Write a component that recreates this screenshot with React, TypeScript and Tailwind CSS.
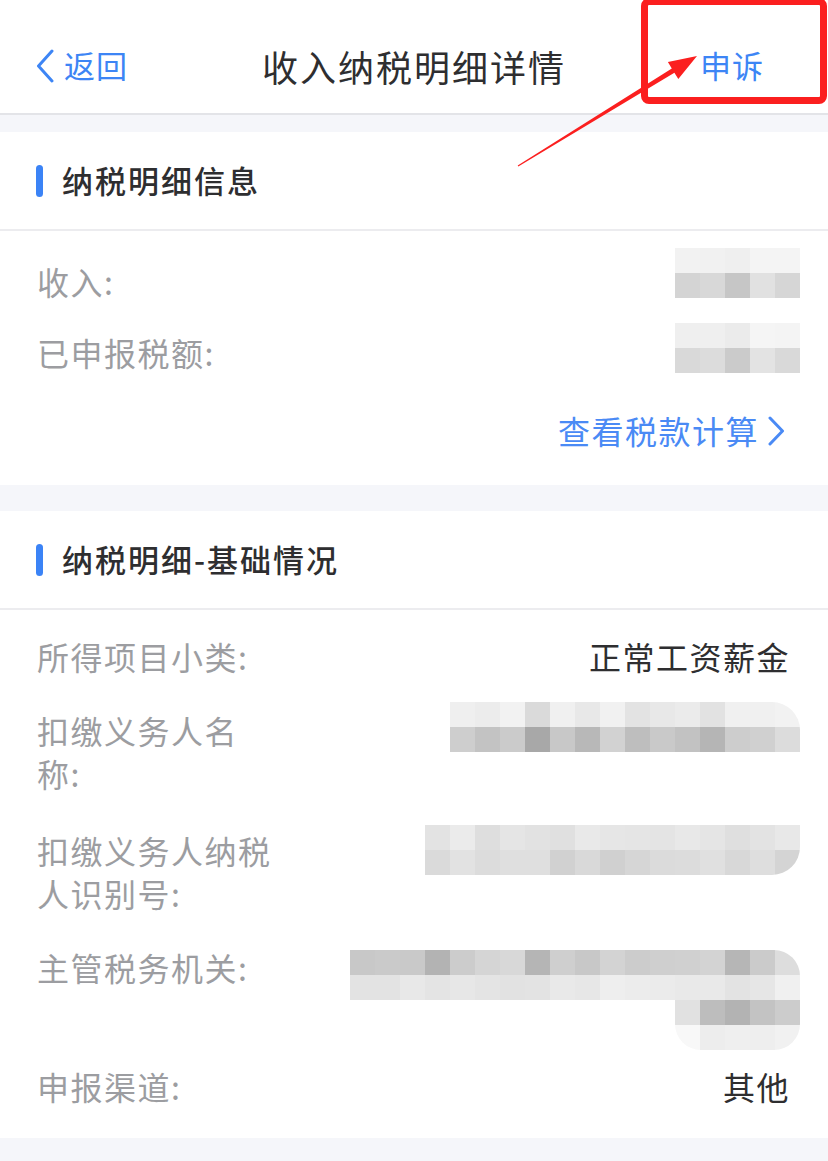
import type { ReactNode } from 'react'

const incomeCells = [
  ['bg-[#f2f2f2]', 'bg-[#f1f1f1]', 'bg-[#efefef]', 'bg-[#f4f4f4]', 'bg-[#f4f4f4]'],
  ['bg-[#d4d4d4]', 'bg-[#d8d8d8]', 'bg-[#c6c6c6]', 'bg-[#e1e1e1]', 'bg-[#d6d6d6]'],
]

const taxCells = [
  ['bg-[#efefef]', 'bg-[#efefef]', 'bg-[#ebebeb]', 'bg-[#f5f5f5]', 'bg-[#f4f4f4]'],
  ['bg-[#d9d9d9]', 'bg-[#dcdcdc]', 'bg-[#cbcbcb]', 'bg-[#e3e3e3]', 'bg-[#d9d9d9]'],
]

const nameCells = [
  ['bg-[#efefef]', 'bg-[#ececec]', 'bg-[#f2f2f2]', 'bg-[#dadada]', 'bg-[#f0f0f0]', 'bg-[#e8e8e8]', 'bg-[#f1f1f1]', 'bg-[#e3e3e3]', 'bg-[#e8e8e8]', 'bg-[#ebebeb]', 'bg-[#e2e2e2]', 'bg-[#f0f0f0]', 'bg-[#f0f0f0]', 'bg-[#f2f2f2]'],
  ['bg-[#cecece]', 'bg-[#c3c3c3]', 'bg-[#cbcbcb]', 'bg-[#a8a8a8]', 'bg-[#c8c8c8]', 'bg-[#b8b8b8]', 'bg-[#d2d2d2]', 'bg-[#bebebe]', 'bg-[#c9c9c9]', 'bg-[#c2c2c2]', 'bg-[#b5b5b5]', 'bg-[#cdcdcd]', 'bg-[#d0d0d0]', 'bg-[#dcdcdc]'],
]

const idCells = [
  ['bg-[#e3e3e3]', 'bg-[#ebebeb]', 'bg-[#dedede]', 'bg-[#e5e5e5]', 'bg-[#e2e2e2]', 'bg-[#e0e0e0]', 'bg-[#e9e9e9]', 'bg-[#e6e6e6]', 'bg-[#e5e5e5]', 'bg-[#e4e4e4]', 'bg-[#e8e8e8]', 'bg-[#e5e5e5]', 'bg-[#dfdfdf]', 'bg-[#e3e3e3]', 'bg-[#e8e8e8]'],
  ['bg-[#dadada]', 'bg-[#e2e2e2]', 'bg-[#dcdcdc]', 'bg-[#dfdfdf]', 'bg-[#dfdfdf]', 'bg-[#d1d1d1]', 'bg-[#d9d9d9]', 'bg-[#d0d0d0]', 'bg-[#d6d6d6]', 'bg-[#dbdbdb]', 'bg-[#dcdcdc]', 'bg-[#e0e0e0]', 'bg-[#d8d8d8]', 'bg-[#dedede]', 'bg-[#d4d4d4]'],
]

const officeCells = [
  ['bg-[#c8c8c8]', 'bg-[#cacaca]', 'bg-[#c9c9c9]', 'bg-[#b3b3b3]', 'bg-[#cccccc]', 'bg-[#d5d5d5]', 'bg-[#d8d8d8]', 'bg-[#b5b5b5]', 'bg-[#cfcfcf]', 'bg-[#c8c8c8]', 'bg-[#d3d3d3]', 'bg-[#cccccc]', 'bg-[#cfcfcf]', 'bg-[#d0d0d0]', 'bg-[#d3d3d3]', 'bg-[#b6b6b6]', 'bg-[#cbcbcb]', 'bg-[#dddddd]'],
  ['bg-[#e3e3e3]', 'bg-[#e3e3e3]', 'bg-[#e8e8e8]', 'bg-[#e4e4e4]', 'bg-[#e7e7e7]', 'bg-[#e4e4e4]', 'bg-[#e2e2e2]', 'bg-[#e3e3e3]', 'bg-[#e9e9e9]', 'bg-[#e7e7e7]', 'bg-[#eeeeee]', 'bg-[#ececec]', 'bg-[#ebebeb]', 'bg-[#e9e9e9]', 'bg-[#e9e9e9]', 'bg-[#e3e3e3]', 'bg-[#e6e6e6]', 'bg-[#f0f0f0]'],
]

const officeTailCells = [
  ['bg-[#e1e1e1]', 'bg-[#bdbdbd]', 'bg-[#b3b3b3]', 'bg-[#c3c3c3]', 'bg-[#cccccc]'],
  ['bg-[#f8f8f8]', 'bg-[#ededed]', 'bg-[#efefef]', 'bg-[#eeeeee]', 'bg-[#f1f1f1]'],
]

function Mosaic({ cells, className = '' }: { cells: string[][]; className?: string }) {
  return (
    <div className={`flex flex-col overflow-hidden ${className}`}>
      {cells.map((row, i) => (
        <div key={i} className="flex">
          {row.map((bg, j) => (
            <div key={j} className={`h-[25px] w-[25px] ${bg}`} />
          ))}
        </div>
      ))}
    </div>
  )
}

function Row({ label, children, className = '' }: { label: string; children: ReactNode; className?: string }) {
  return (
    <div className={`flex items-start ${className}`}>
      <div className="w-[238px] shrink-0 leading-[43px] text-[#9c9da1]">{label}</div>
      <div className="flex flex-1 justify-end leading-[43px] text-[#2e2e30]">{children}</div>
    </div>
  )
}

function SectionTitle({ children }: { children: ReactNode }) {
  return (
    <div className="flex h-[99px] items-center border-b-2 border-[#ececef] px-[36px]">
      <span className="h-[32px] w-[7px] rounded-full bg-[#3b83f6]" />
      <span className="ml-[19px] text-[31px] font-medium tracking-[2px] text-[#2e2e30]">{children}</span>
    </div>
  )
}

export default function App() {
  return (
    <div className="relative min-h-[1161px] overflow-hidden bg-[#f5f6fa] font-['Noto_Sans_CJK_SC','Noto_Sans',sans-serif]">
      <header className="grid h-[115px] grid-cols-[1fr_auto_1fr] items-center border-b-2 border-[#e3e4e8] bg-white pt-[18px]">
        <div className="flex items-center pl-[36px] text-[31px] tracking-[1px] text-[#3d85f5]">
          <svg width="18" height="34" viewBox="0 0 18 34" fill="none">
            <path d="M16 2 L2.5 17 L16 32" stroke="currentColor" strokeWidth="3" strokeLinecap="round" strokeLinejoin="round" />
          </svg>
          <span className="ml-[10px]">返回</span>
        </div>
        <h1 className="text-[36px] tracking-[2px] text-[#2e2e30]">收入纳税明细详情</h1>
        <div className="flex justify-end pr-[64px] text-[31px] tracking-[1px] text-[#3d85f5]">申诉</div>
      </header>

      <section className="mt-[17px] bg-white">
        <SectionTitle>纳税明细信息</SectionTitle>
        <div className="flex flex-col pb-[33px] pl-[37px] pr-[38px] pt-[29px] text-[32px] tracking-[1.5px]">
          <Row label="收入:">
            <Mosaic cells={incomeCells} className="-mr-[10px] -mt-[12px]" />
          </Row>
          <Row label="已申报税额:" className="mt-[28px]">
            <Mosaic cells={taxCells} className="-mr-[10px] -mt-[8px]" />
          </Row>
          <div className="mr-[5px] mt-[35px] flex items-center justify-end leading-[43px] text-[#4a8af5]">
            <span>查看税款计算</span>
            <svg width="17" height="30" viewBox="0 0 17 30" fill="none" className="ml-[9px]">
              <path d="M2 2 L14.5 15 L2 28" stroke="currentColor" strokeWidth="3" strokeLinecap="round" strokeLinejoin="round" />
            </svg>
          </div>
        </div>
      </section>

      <section className="mt-[26px] bg-white">
        <SectionTitle>纳税明细-基础情况</SectionTitle>
        <div className="flex flex-col pb-[30px] pl-[37px] pr-[38px] pt-[25px] text-[32px] tracking-[1.5px]">
          <Row label="所得项目小类:">
            <span>正常工资薪金</span>
          </Row>
          <Row label="扣缴义务人名称:" className="mt-[31px]">
            <Mosaic cells={nameCells} className="-mr-[10px] -mt-[7px] rounded-tr-[28px]" />
          </Row>
          <Row label="扣缴义务人纳税人识别号:" className="mt-[34px]">
            <Mosaic cells={idCells} className="-mr-[10px] -mt-[4px] rounded-br-[28px]" />
          </Row>
          <Row label="主管税务机关:" className="mt-[31px]">
            <div className="-mr-[10px] mt-[4px] flex flex-col items-end">
              <Mosaic cells={officeCells} className="rounded-tr-[26px]" />
              <Mosaic cells={officeTailCells} className="rounded-b-[26px]" />
            </div>
          </Row>
          <Row label="申报渠道:" className="mt-[15px]">
            <span>其他</span>
          </Row>
        </div>
      </section>

      {/* annotation overlay */}
      <div className="pointer-events-none absolute left-[641px] top-[-2px] h-[106px] w-[186px] rounded-[8px] border-[7px] border-[#fb1f1f]" />
      <svg className="pointer-events-none absolute left-0 top-0" width="828" height="200" viewBox="0 0 828 200">
        <polygon
          points="517.7,165.6 671.8,68.5 667.9,62.1 697,56 678.3,79.1 674.4,72.7 518.3,166.4"
          fill="#fb1f1f"
        />
      </svg>
    </div>
  )
}
